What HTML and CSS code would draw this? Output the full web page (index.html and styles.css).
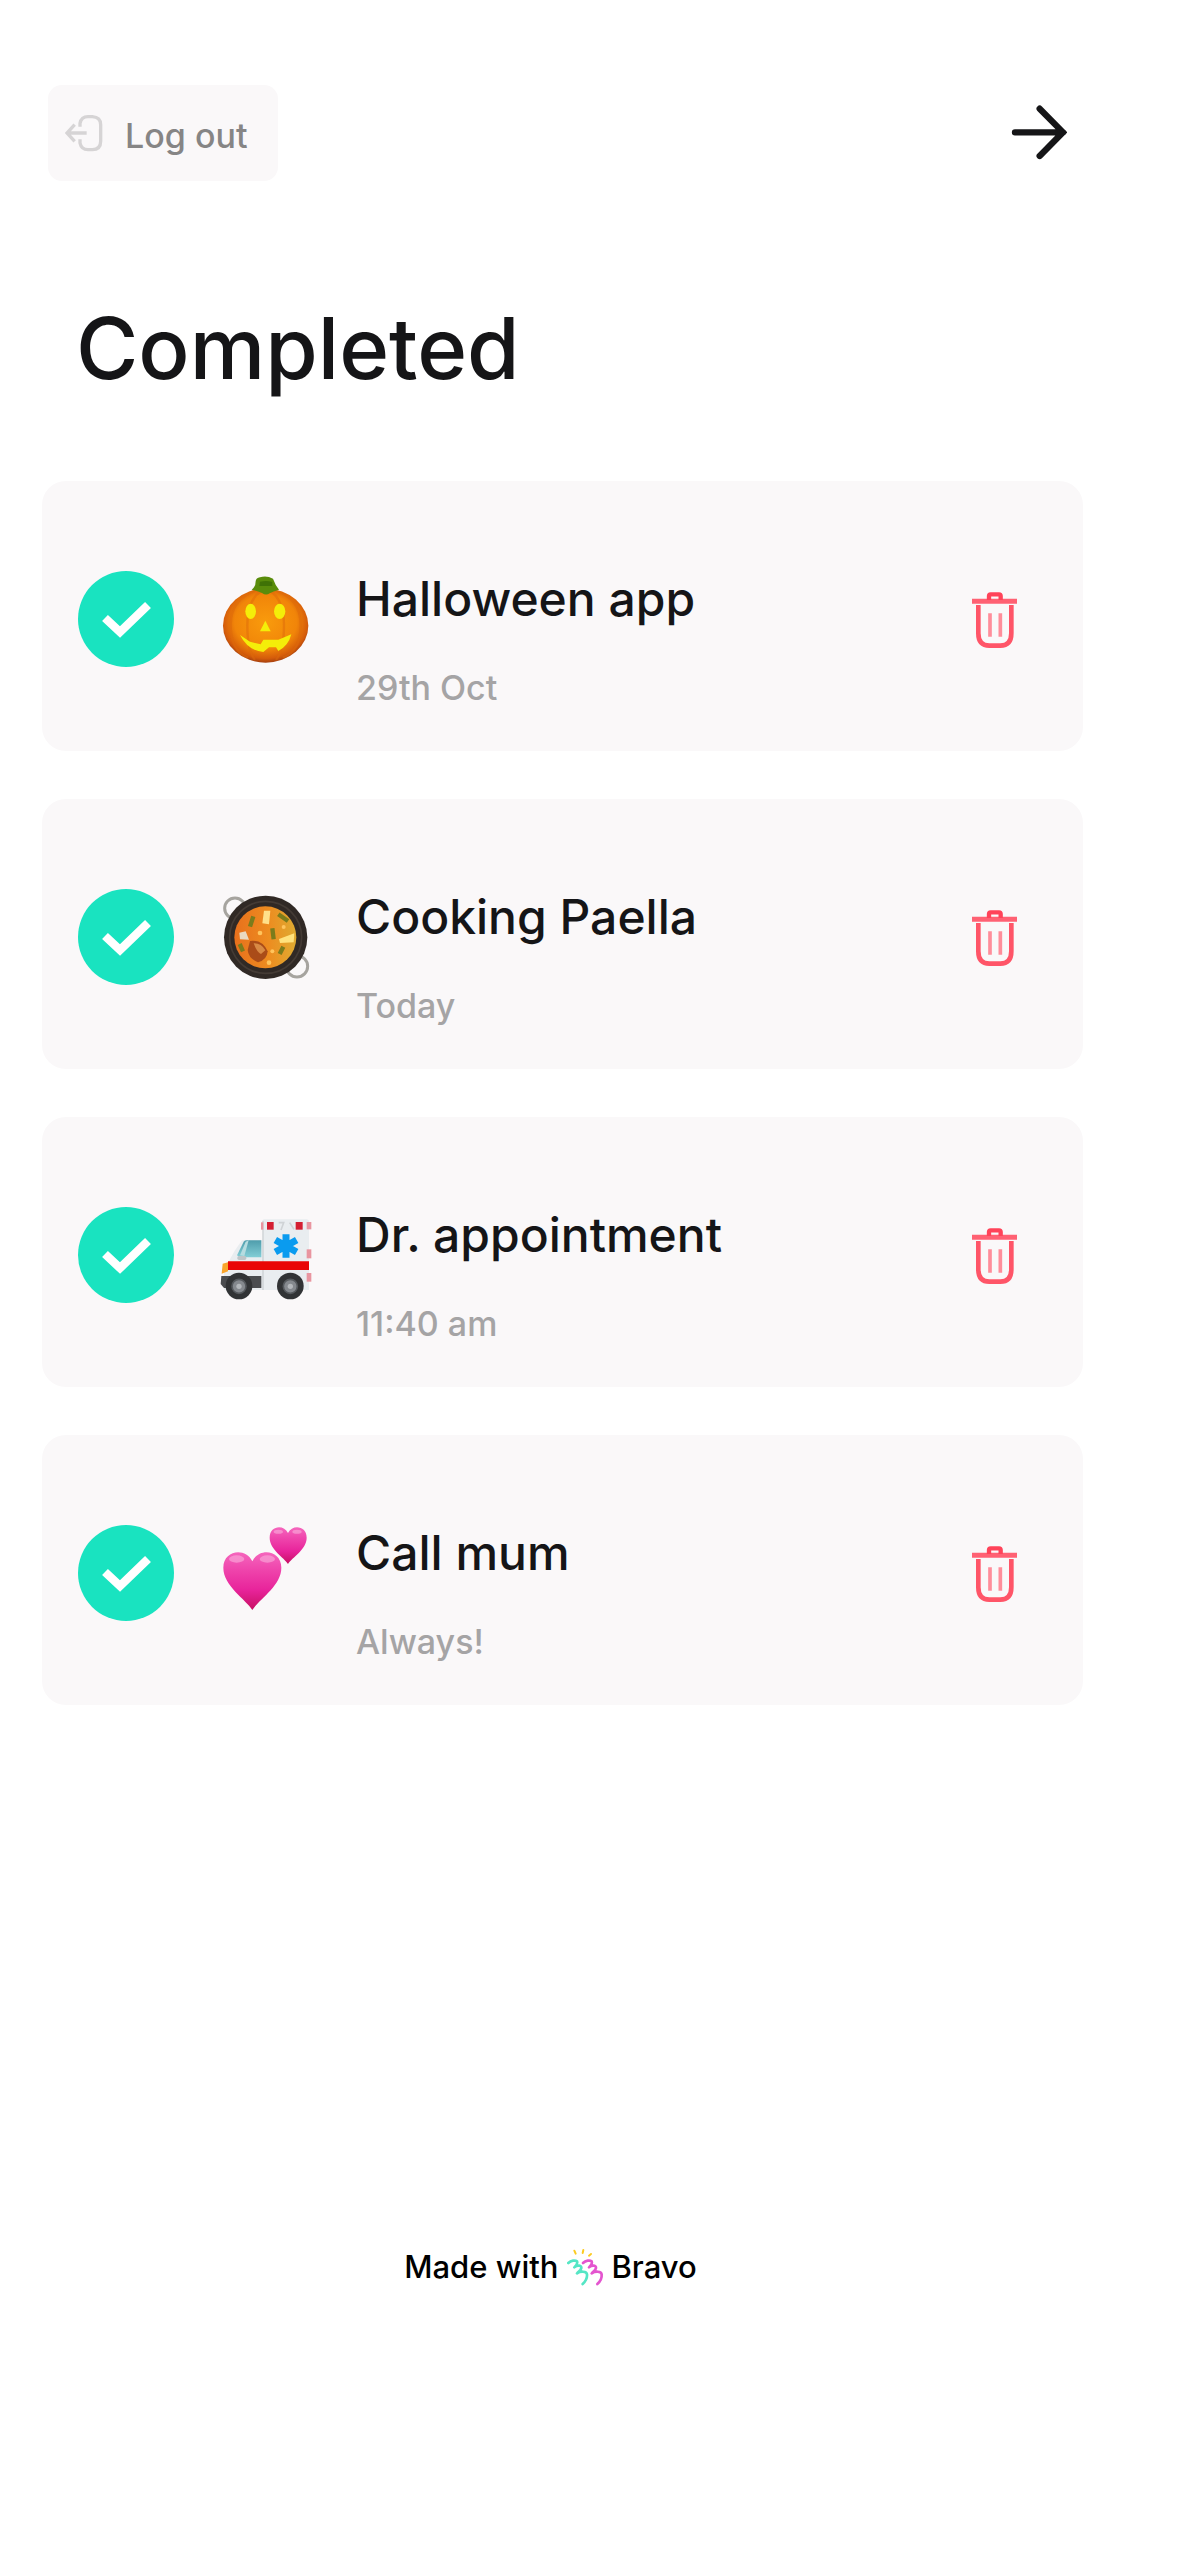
FILE: index.html
```html
<!DOCTYPE html>
<html lang="en">
<head>
<meta charset="utf-8">
<meta name="viewport" content="width=device-width, initial-scale=1">
<title>Completed</title>
<link rel="stylesheet" href="styles.css">
</head>
<body>
<svg class="defs" aria-hidden="true">
  <defs>
    <symbol id="check" viewBox="0 0 96 96">
      <path d="M27 47 42 61 70 34" fill="none" stroke="#fff" stroke-width="8.500"/>
    </symbol>
    <symbol id="trash" viewBox="96 366 135 171">
      <g fill="none" stroke="#ff4359">
        <path d="M96 394H231" stroke-width="15" stroke="#ff6173"/>
        <path d="M147 390V378Q147 373 152 373H177Q182 373 182 378V390" stroke-width="13"/>
        <path d="M115 405V490Q115 527 148 527H181Q214 527 214 490V405" stroke-width="14" stroke="#ff5568"/>
        <path d="M150 430V500M181 430V500" stroke-width="11" stroke="#ff8d9a"/>
      </g>
    </symbol>
    <radialGradient id="pumpkinSkin" cx=".5" cy=".45" r=".56">
      <stop offset="0" stop-color="#f99b0c"/><stop offset=".65" stop-color="#f18509"/><stop offset=".88" stop-color="#d55c0a"/><stop offset="1" stop-color="#9f3c10"/>
    </radialGradient>
    <linearGradient id="broth"><stop offset="0" stop-color="#e8701c"/><stop offset=".55" stop-color="#ed8c20"/><stop offset="1" stop-color="#dfab31"/></linearGradient>
    <linearGradient id="glass" x2="0" y2="1"><stop offset="0" stop-color="#4f9dac"/><stop offset="1" stop-color="#83ced6"/></linearGradient>
    <linearGradient id="pink" x2="0" y2="1"><stop offset="0" stop-color="#f566bd"/><stop offset=".3" stop-color="#ef45ac"/><stop offset=".65" stop-color="#e8249b"/><stop offset="1" stop-color="#c80f63"/></linearGradient>
  </defs>
</svg>

<main class="page">
  <header class="topbar">
    <button class="logout" type="button">
      <svg class="logout-icon" viewBox="105 132 114 114" aria-hidden="true">
        <g fill="none" stroke="#d6d4d5" stroke-width="10">
          <path d="M150 170V160Q154 140 174 140H187Q212 142 212 164V214Q212 239 187 239H174Q154 239 150 219V208"/>
          <path d="M170 189H111M134 164 111 189 134 214"/>
        </g>
      </svg>
      <span class="logout-label">Log out</span>
    </button>
    <button class="next" type="button" aria-label="Next">
      <svg class="next-icon" viewBox="96 73 168 168" aria-hidden="true">
        <path d="M108 155H252M182 84 252 155 182 226" fill="none" stroke="#151517" stroke-width="19" stroke-linecap="round"/>
      </svg>
    </button>
  </header>

  <h1 class="title">Completed</h1>

  <ul class="tasks">
    <li class="task">
      <label class="done"><input class="done-box" type="checkbox" checked aria-label="Halloween app done"><svg class="done-mark" aria-hidden="true"><use href="#check"/></svg></label>
      <svg class="emoji" viewBox="51 63 288 288" role="img" aria-label="Pumpkin">
        <ellipse cx="197" cy="227" rx="128" ry="111" fill="url(#pumpkinSkin)"/>
        <g fill="none" stroke="#dd690a" stroke-width="7" opacity=".5">
          <path d="M172 120Q92 145 92 225T145 323M184 122Q142 150 142 226T165 330M210 122Q252 150 252 226T228 330M222 120Q302 145 302 225T248 323"/>
        </g>
        <path d="M155 119Q167 111 167 94Q168 84 180 82Q200 76 219 86Q226 106 237 119Q219 124 209 130Q198 138 186 129Q172 122 155 119Z" fill="#598c0b"/>
        <path d="M180 95Q200 90 217 96V108H178Z" fill="#3f7206"/>
        <ellipse cx="152" cy="184" rx="16" ry="23" fill="#f4ee09"/><ellipse cx="239" cy="184" rx="17" ry="23" fill="#f4ee09"/>
        <path d="M196 212 212 244H180Z" fill="#f4ee09"/>
        <path d="M120 255 150 275 182 283 190 269 235 269 274 253Q265 288 235 303L228 292 207 292 190 306Q144 302 120 255Z" fill="#f4ee09"/>
      </svg>
      <div class="text"><h2 class="name">Halloween app</h2><p class="when">29th Oct</p></div>
      <button class="delete" type="button" aria-label="Delete Halloween app"><svg class="trash" aria-hidden="true"><use href="#trash"/></svg></button>
    </li>
    <li class="task">
      <label class="done"><input class="done-box" type="checkbox" checked aria-label="Cooking Paella done"><svg class="done-mark" aria-hidden="true"><use href="#check"/></svg></label>
      <svg class="emoji" viewBox="51 57 288 288" role="img" aria-label="Paella pan">
        <g fill="none" stroke="#a6a49f" stroke-width="9"><circle cx="105" cy="115" r="31"/><circle cx="291" cy="289" r="32"/></g>
        <circle cx="197" cy="202" r="125" fill="#302925"/>
        <circle cx="197" cy="202" r="108" fill="none" stroke="#443b35" stroke-width="5"/>
        <circle cx="196" cy="202" r="93" fill="url(#broth)"/>
        <path d="M192 122 211 122 207 163 187 160Z" fill="#ffe08a"/>
        <path d="M237 207 283 190 281 217 240 219Z" fill="#ffe27d"/>
        <path d="M118 188 137 184 147 209 120 208Z" fill="#ead9c0"/>
        <path d="M150 213Q187 208 203 244Q201 270 174 277Q145 265 143 240Z" fill="#aa4c18"/>
        <path d="M161 220Q184 219 196 241L183 252Q170 246 161 220Z" fill="#d88a45"/>
        <g fill="none" stroke="#7b7c1c" stroke-width="13"><path d="M160 139 150 170M235 133 264 153M217 175 221 208M250 230 239 252M119 222 129 244"/></g>
        <g fill="#ffc45c"><circle cx="180" cy="189" r="7"/><circle cx="217" cy="244" r="6"/><circle cx="251" cy="171" r="6"/><circle cx="207" cy="278" r="7"/></g>
      </svg>
      <div class="text"><h2 class="name">Cooking Paella</h2><p class="when">Today</p></div>
      <button class="delete" type="button" aria-label="Delete Cooking Paella"><svg class="trash" aria-hidden="true"><use href="#trash"/></svg></button>
    </li>
    <li class="task">
      <label class="done"><input class="done-box" type="checkbox" checked aria-label="Dr. appointment done"><svg class="done-mark" aria-hidden="true"><use href="#check"/></svg></label>
      <svg class="emoji" viewBox="51 51 288 288" role="img" aria-label="Ambulance">
        <path d="M190 88H320Q327 88 327 96V300H72V240L104 182 126 151H190Z" fill="#e9edf0"/>
        <path d="M189 92V300" stroke="#cbd0d3" stroke-width="4"/>
        <path d="M111 196 131 155Q134 151 141 151H184V202H119Z" fill="url(#glass)"/>
        <path d="M120 196 137 155 146 151 133 198Z" fill="#b6dce0"/>
        <rect x="112" y="198" width="27" height="12" rx="5" fill="#bfc5c8"/>
        <path d="M84 214H327V240H84Z" fill="#e90505"/>
        <path d="M68 221 84 217V244L65 251Z" fill="#f9a52b"/>
        <path d="M64 258H184V294H72L62 282Z" fill="#4a4c4f"/>
        <g fill="#d41f32"><rect x="201" y="96" width="20" height="23"/><rect x="287" y="96" width="21" height="23"/></g>
        <g fill="#e995a0"><rect x="183" y="97" width="7" height="22"/><rect x="320" y="96" width="14" height="22"/><rect x="320" y="178" width="14" height="27"/><rect x="320" y="249" width="14" height="26"/></g>
        <path d="M236 98H251L243 120M269 98 282 118" fill="none" stroke="#cfd3d6" stroke-width="5"/>
        <path d="M258 133V203M226 150 290 186M290 150 226 186" stroke="#0a9bef" stroke-width="21"/>
        <g fill="#313335"><circle cx="117" cy="288" r="40"/><circle cx="271" cy="288" r="40"/></g>
        <g fill="#85898e" stroke="#55595d" stroke-width="5"><circle cx="117" cy="289" r="21"/><circle cx="271" cy="289" r="21"/></g>
        <g fill="#b3b7bb"><circle cx="117" cy="289" r="8"/><circle cx="271" cy="289" r="8"/></g>
      </svg>
      <div class="text"><h2 class="name">Dr. appointment</h2><p class="when">11:40 am</p></div>
      <button class="delete" type="button" aria-label="Delete Dr. appointment"><svg class="trash" aria-hidden="true"><use href="#trash"/></svg></button>
    </li>
    <li class="task">
      <label class="done"><input class="done-box" type="checkbox" checked aria-label="Call mum done"><svg class="done-mark" aria-hidden="true"><use href="#check"/></svg></label>
      <svg class="emoji" viewBox="51 60 288 288" role="img" aria-label="Two hearts">
        <path d="M157 315C137 282 70 243 70 188C70 135 137 126 157 169C177 126 244 135 244 188C244 243 177 282 157 315Z" fill="url(#pink)"/>
        <path d="M264 177C252 157 209 134 209 98C209 62 251 57 264 84C277 57 320 62 320 98C320 134 276 157 264 177Z" fill="url(#pink)"/>
        <g fill="#f9a2d7" opacity=".7"><ellipse cx="110" cy="162" rx="23" ry="11"/><ellipse cx="202" cy="162" rx="23" ry="11"/><ellipse cx="235" cy="80" rx="14" ry="6"/><ellipse cx="291" cy="80" rx="14" ry="6"/></g>
      </svg>
      <div class="text"><h2 class="name">Call mum</h2><p class="when">Always!</p></div>
      <button class="delete" type="button" aria-label="Delete Call mum"><svg class="trash" aria-hidden="true"><use href="#trash"/></svg></button>
    </li>
  </ul>

  <footer class="credit">
    <span>Made with</span>
    <svg class="credit-logo" viewBox="530 48 111 114" aria-hidden="true">
      <g fill="none" stroke-linecap="round" stroke-linejoin="round" stroke-width="8">
        <path d="M552 56 556 65M579 54 577 63M602 66 596 71" stroke="#fccb22" stroke-width="6"/>
        <path d="M578 93C586 85 599 84 604 88C607 94 601 101 596 106C606 98 618 100 617 108C616 115 609 119 604 124C614 117 633 117 634 127C635 138 629 149 621 156" stroke="#e455cf"/>
        <path d="M534 93C542 85 555 84 560 88C563 94 557 101 552 106C562 98 574 100 573 108C572 115 565 119 560 124C570 117 589 117 590 127C591 138 585 149 577 156" stroke="#55e6c5"/>
      </g>
    </svg>
    <span>Bravo</span>
  </footer>
</main>
</body>
</html>
```

FILE: styles.css
```css
* {
  box-sizing: border-box;
  margin: 0;
}

body {
  background: #fff;
  color: #151517;
  font-family: Inter, "Liberation Sans", sans-serif;
}

button {
  border: 0;
  padding: 0;
  background: none;
  color: inherit;
  font: inherit;
  cursor: pointer;
}

svg {
  display: block;
}

.defs {
  position: absolute;
  width: 0;
  height: 0;
}

.page {
  padding: 85px 106px 80px 42px;
}

.topbar {
  display: flex;
  justify-content: space-between;
  align-items: center;
  padding: 0 16px 0 6px;
}

.logout {
  display: flex;
  align-items: center;
  gap: 22px;
  height: 96px;
  padding: 0 31px 0 17px;
  border-radius: 14px;
  background: #faf8f9;
  color: #868585;
  font-size: 34px;
  font-weight: 500;
  line-height: 42px;
}

.logout-label {
  padding-top: 5px;
}

.logout-icon {
  width: 38px;
  height: 38px;
}

.next-icon {
  width: 56px;
  height: 56px;
}

.title {
  margin: 116px 0 80px;
  padding-left: 34px;
  font-size: 85px;
  font-weight: 500;
  line-height: 104px;
}

.tasks {
  display: grid;
  gap: 48px;
  padding: 0;
  list-style: none;
}

.task {
  display: flex;
  align-items: flex-start;
  gap: 43px;
  padding: 90px 35px 42px 36px;
  border-radius: 24px;
  background: #faf8f9;
}

.done {
  display: grid;
  flex: none;
}

.done-box,
.done-mark {
  grid-area: 1 / 1;
  width: 96px;
  height: 96px;
}

.done-box {
  margin: 0;
  border-radius: 50%;
  appearance: none;
  background: #dddbdc;
}

.done-box:checked {
  background: #19e3c0;
}

.done-mark {
  pointer-events: none;
}

.emoji {
  flex: none;
  width: 96px;
  height: 96px;
}

.text {
  display: grid;
  flex: 1;
  gap: 40px;
}

.name {
  font-size: 48px;
  font-weight: 500;
  line-height: 56px;
}

.when {
  color: #a5a4a5;
  font-size: 34px;
  font-weight: 500;
  line-height: 42px;
}

.delete {
  display: grid;
  flex: none;
  place-items: center;
  width: 107px;
  height: 98px;
}

.trash {
  width: 45px;
  height: 57px;
}

.credit {
  display: flex;
  justify-content: center;
  align-items: center;
  gap: 8px;
  margin-top: 542px;
  padding-right: 24px;
  color: #000;
  font-size: 31px;
  font-weight: 500;
  line-height: 40px;
}

.credit-logo {
  width: 37px;
  height: 38px;
}
```
